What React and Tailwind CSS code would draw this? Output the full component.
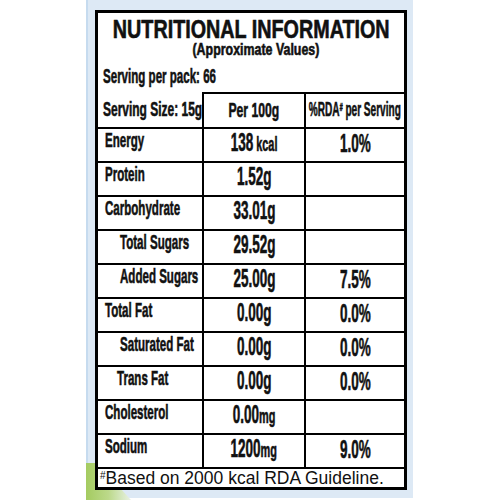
import React from 'react';

const rows = [
  { label: 'Energy', val: '138', unit: ' kcal', rda: '1.0%' },
  { label: 'Protein', val: '1.52g' },
  { label: 'Carbohydrate', val: '33.01g' },
  { label: 'Total Sugars', val: '29.52g', pad: 'pl-[22px]' },
  { label: 'Added Sugars', val: '25.00g', rda: '7.5%', pad: 'pl-[22px]' },
  { label: 'Total Fat', val: '0.00g', rda: '0.0%' },
  { label: 'Saturated Fat', val: '0.00g', rda: '0.0%', pad: 'pl-[22px]' },
  { label: 'Trans Fat', val: '0.00g', rda: '0.0%', pad: 'pl-[19px]' },
  { label: 'Cholesterol', val: '0.00', unit: 'mg' },
  { label: 'Sodium', val: '1200', unit: 'mg', rda: '9.0%' },
];

function Row({ r }) {
  return (
    <div className="grid grid-cols-[104px_102px_100px] h-[34px] border-t-2 border-black">
      <div className={(r.pad || 'pl-[7px]') + ' text-[21px] leading-[20px] pt-px font-bold'}>
        <span className="inline-block origin-left scale-x-[0.55] whitespace-nowrap">{r.label}</span>
      </div>
      <div className="border-l-2 border-black flex justify-center text-[26px] leading-[26px] font-bold">
        <span className="inline-block scale-x-[0.52] whitespace-nowrap">
          {r.val}
          {r.unit && <span className="text-[21px]">{r.unit}</span>}
        </span>
      </div>
      <div className="border-l-2 border-black flex justify-center text-[25px] leading-[28px] font-bold">
        {r.rda && <span className="inline-block scale-x-[0.54] whitespace-nowrap">{r.rda}</span>}
      </div>
    </div>
  );
}

export default function App() {
  return (
    <div className="relative w-[500px] h-[500px] bg-white overflow-hidden text-[#111] font-['Liberation_Sans',Arial,sans-serif] [-webkit-text-stroke:0.6px_#111]">
      <div className="ml-[86px] w-[327px] h-[498px] bg-[#dde9f5] border-l-2 border-[#c6dbef] pt-[10px] pl-[7px]">
        <div className="relative z-10 w-[312px] h-[480px] bg-white border-[3px] border-black flex flex-col">
          <div className="h-[79px] flex flex-col items-center">
            <div className="mt-[5px] text-[25px] leading-[22px] font-bold">
              <span className="inline-block scale-x-[0.79] whitespace-nowrap">NUTRITIONAL INFORMATION</span>
            </div>
            <div className="mt-[2px] ml-[10px] text-[17px] leading-[16px] font-bold">
              <span className="inline-block scale-x-[0.73] whitespace-nowrap">(Approximate Values)</span>
            </div>
            <div className="self-start mt-[6px] pl-[5px] text-[21px] leading-[24px] font-bold">
              <span className="inline-block origin-left scale-x-[0.55] whitespace-nowrap">Serving per pack: 66</span>
            </div>
          </div>

          <div className="grid grid-cols-[104px_102px_100px] h-[35px] font-bold text-[21px] leading-[24px]">
            <div className="pl-[5px] pt-[5px]">
              <span className="inline-block origin-left scale-x-[0.57] whitespace-nowrap">Serving Size: 15g</span>
            </div>
            <div className="border-l-2 border-t-2 border-black flex justify-center pt-[4px]">
              <span className="inline-block scale-x-[0.58] whitespace-nowrap">Per 100g</span>
            </div>
            <div className="border-l-2 border-t-2 border-black flex justify-center pt-[3px]">
              <span className="inline-block scale-x-[0.48] whitespace-nowrap">
                %RDA<sup className="text-[11px]">#</sup> per Serving
              </span>
            </div>
          </div>

          {rows.map((r) => (
            <Row key={r.label} r={r} />
          ))}

          <div className="flex-1 border-t-2 border-black pl-[2px] text-[17.5px] leading-[18px] [-webkit-text-stroke:0] whitespace-nowrap">
            <sup className="text-[10px]">#</sup>Based on 2000 kcal RDA Guideline.
          </div>
        </div>
      </div>
      <div className="absolute left-[86px] top-[463px] w-[45px] h-[37px] bg-linear-to-r from-[#a4cb60] via-[#bcd98a] to-[#e9f1e4] [clip-path:polygon(0_0,25%_0,100%_100%,0_100%)]" />
    </div>
  );
}
